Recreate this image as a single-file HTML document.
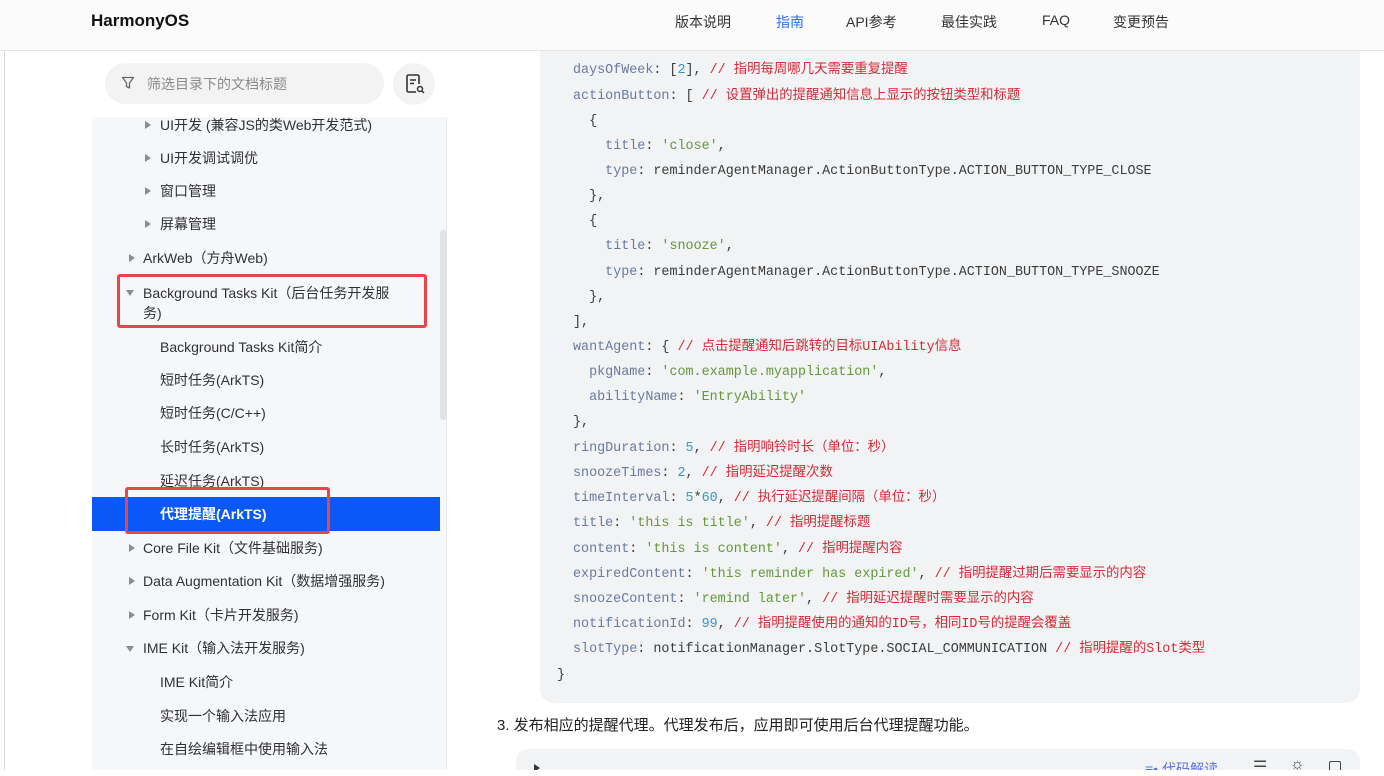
<!DOCTYPE html>
<html><head><meta charset="utf-8">
<style>
*{margin:0;padding:0;box-sizing:border-box}
html{width:1384px;height:776px;overflow:hidden}
body{width:1384px;height:776px;overflow:hidden;background:#fff;font-family:"Liberation Sans","Noto Sans CJK SC",sans-serif;position:relative;color:#191919}
.abs{position:absolute}
.hdr{left:0;top:0;width:1384px;height:51px;background:#fbfbfc;border-bottom:1px solid #e4e5e7}
.logo{left:91px;top:11px;font-size:17px;font-weight:bold;color:#111}
.nav{top:12px;font-size:14px;color:#333}
.side{left:92px;top:51px;width:355px;height:725px;background:#f6f7f9;border-right:1px solid #e8e9eb}
.stop{left:92px;top:51px;width:355px;height:66px;background:#fff}
.search{left:105px;top:63px;width:279px;height:41px;border-radius:21px;background:#f3f3f4;color:#8a8a8a;font-size:14px;padding:11px 0 0 42px}
.sbtn{left:393px;top:63px;width:42px;height:42px;border-radius:50%;background:#f3f3f4}
.it{font-size:14px;color:#303133;white-space:nowrap;line-height:20px}
.tri{width:0;height:0;border-top:4px solid transparent;border-bottom:4px solid transparent;border-left:6px solid #8a8c90}
.trid{width:0;height:0;border-left:4px solid transparent;border-right:4px solid transparent;border-top:6px solid #8a8c90}
.sel{left:92px;top:497px;width:348px;height:34px;background:#0a59f7}
.scroll{left:440px;top:230px;width:7px;height:190px;background:#e2e3e6;border-radius:3px}
.red{border:3px solid #e8464a;border-radius:3px}
.code{left:540px;top:51px;width:820px;height:652px;background:#f1f3f5;border-radius:0 0 14px 14px}
.cl{position:absolute;left:573px;font-family:"Liberation Mono","Noto Sans CJK SC",monospace;font-size:13.4px;color:#3b3b3b;white-space:pre;line-height:18px}
.k{color:#6b78a4}.s{color:#64983a}.c{color:#d72a36}.n{color:#3a94d2}
.p3{left:497px;top:714px;font-size:15px;color:#222}
.code2{left:516px;top:749px;width:844px;height:27px;background:#f1f3f5;border-radius:12px 12px 0 0}
.bot{left:0;top:770px;width:1384px;height:6px;background:#fff}
</style></head><body>
<div class="abs code"></div>
<div class="cl" style="top:62px"><span class="k">daysOfWeek</span>: [<span class="n">2</span>], <span class="c">// 指明每周哪几天需要重复提醒</span></div>
<div class="cl" style="top:88px"><span class="k">actionButton</span>: [ <span class="c">// 设置弹出的提醒通知信息上显示的按钮类型和标题</span></div>
<div class="cl" style="top:113px">  {</div>
<div class="cl" style="top:138px">    <span class="k">title</span>: <span class="s">'close'</span>,</div>
<div class="cl" style="top:163px">    <span class="k">type</span>: reminderAgentManager.ActionButtonType.ACTION_BUTTON_TYPE_CLOSE</div>
<div class="cl" style="top:188px">  },</div>
<div class="cl" style="top:213px">  {</div>
<div class="cl" style="top:238px">    <span class="k">title</span>: <span class="s">'snooze'</span>,</div>
<div class="cl" style="top:264px">    <span class="k">type</span>: reminderAgentManager.ActionButtonType.ACTION_BUTTON_TYPE_SNOOZE</div>
<div class="cl" style="top:289px">  },</div>
<div class="cl" style="top:314px">],</div>
<div class="cl" style="top:339px"><span class="k">wantAgent</span>: { <span class="c">// 点击提醒通知后跳转的目标UIAbility信息</span></div>
<div class="cl" style="top:364px">  <span class="k">pkgName</span>: <span class="s">'com.example.myapplication'</span>,</div>
<div class="cl" style="top:389px">  <span class="k">abilityName</span>: <span class="s">'EntryAbility'</span></div>
<div class="cl" style="top:414px">},</div>
<div class="cl" style="top:440px"><span class="k">ringDuration</span>: <span class="n">5</span>, <span class="c">// 指明响铃时长（单位：秒）</span></div>
<div class="cl" style="top:465px"><span class="k">snoozeTimes</span>: <span class="n">2</span>, <span class="c">// 指明延迟提醒次数</span></div>
<div class="cl" style="top:490px"><span class="k">timeInterval</span>: <span class="n">5</span>*<span class="n">60</span>, <span class="c">// 执行延迟提醒间隔（单位：秒）</span></div>
<div class="cl" style="top:515px"><span class="k">title</span>: <span class="s">'this is title'</span>, <span class="c">// 指明提醒标题</span></div>
<div class="cl" style="top:541px"><span class="k">content</span>: <span class="s">'this is content'</span>, <span class="c">// 指明提醒内容</span></div>
<div class="cl" style="top:566px"><span class="k">expiredContent</span>: <span class="s">'this reminder has expired'</span>, <span class="c">// 指明提醒过期后需要显示的内容</span></div>
<div class="cl" style="top:591px"><span class="k">snoozeContent</span>: <span class="s">'remind later'</span>, <span class="c">// 指明延迟提醒时需要显示的内容</span></div>
<div class="cl" style="top:616px"><span class="k">notificationId</span>: <span class="n">99</span>, <span class="c">// 指明提醒使用的通知的ID号，相同ID号的提醒会覆盖</span></div>
<div class="cl" style="top:641px"><span class="k">slotType</span>: notificationManager.SlotType.SOCIAL_COMMUNICATION <span class="c">// 指明提醒的Slot类型</span></div>
<div class="cl" style="top:667px;left:557px">}</div>

<div class="abs" style="left:4px;top:0;width:1px;height:776px;background:#d8d8d8"></div>
<div class="abs hdr"></div>
<div class="abs logo">HarmonyOS</div>
<div class="abs nav" style="left:675px">版本说明</div>
<div class="abs nav" style="left:776px;color:#2e6ff2">指南</div>
<div class="abs nav" style="left:846px">API参考</div>
<div class="abs nav" style="left:941px">最佳实践</div>
<div class="abs nav" style="left:1042px">FAQ</div>
<div class="abs nav" style="left:1113px">变更预告</div>

<div class="abs side"></div>
<div class="abs stop"></div>
<div class="abs search">筛选目录下的文档标题</div>
<svg class="abs" style="left:121px;top:76px" width="14" height="14" viewBox="0 0 14 14"><path d="M1.5 1.5h11L8.5 7v5l-3-1.5V7z" fill="none" stroke="#666" stroke-width="1.3" stroke-linejoin="round"/></svg>
<div class="abs sbtn"></div>
<svg class="abs" style="left:404px;top:73px" width="22" height="22" viewBox="0 0 22 22"><path d="M12 19H4.5a1.5 1.5 0 0 1-1.5-1.5v-14A1.5 1.5 0 0 1 4.5 2h9A1.5 1.5 0 0 1 15 3.5V11" fill="none" stroke="#333" stroke-width="1.6"/><path d="M6 7h6M6 10.5h4" stroke="#333" stroke-width="1.6"/><circle cx="16" cy="16" r="2.5" fill="none" stroke="#333" stroke-width="1.5"/><path d="M18 18l2 2" stroke="#333" stroke-width="1.5"/></svg>

<div class="abs scroll"></div>
<div class="abs sel"></div>

<div class="abs tri" style="left:145px;top:121px"></div><div class="abs it" style="left:160px;top:115px">UI开发 (兼容JS的类Web开发范式)</div>
<div class="abs tri" style="left:145px;top:154px"></div><div class="abs it" style="left:160px;top:148px">UI开发调试调优</div>
<div class="abs tri" style="left:145px;top:187px"></div><div class="abs it" style="left:160px;top:181px">窗口管理</div>
<div class="abs tri" style="left:145px;top:220px"></div><div class="abs it" style="left:160px;top:214px">屏幕管理</div>
<div class="abs tri" style="left:129px;top:254px"></div><div class="abs it" style="left:143px;top:248px">ArkWeb（方舟Web)</div>
<div class="abs trid" style="left:126px;top:290px"></div><div class="abs it" style="left:143px;top:283px">Background Tasks Kit（后台任务开发服</div>
<div class="abs it" style="left:143px;top:303px">务)</div>
<div class="abs it" style="left:160px;top:337px">Background Tasks Kit简介</div>
<div class="abs it" style="left:160px;top:370px">短时任务(ArkTS)</div>
<div class="abs it" style="left:160px;top:403px">短时任务(C/C++)</div>
<div class="abs it" style="left:160px;top:437px">长时任务(ArkTS)</div>
<div class="abs it" style="left:160px;top:471px">延迟任务(ArkTS)</div>
<div class="abs it" style="left:160px;top:504px;color:#fff;font-weight:bold">代理提醒(ArkTS)</div>
<div class="abs tri" style="left:129px;top:544px"></div><div class="abs it" style="left:143px;top:538px">Core File Kit（文件基础服务)</div>
<div class="abs tri" style="left:129px;top:577px"></div><div class="abs it" style="left:143px;top:571px">Data Augmentation Kit（数据增强服务)</div>
<div class="abs tri" style="left:129px;top:611px"></div><div class="abs it" style="left:143px;top:605px">Form Kit（卡片开发服务)</div>
<div class="abs trid" style="left:126px;top:646px"></div><div class="abs it" style="left:143px;top:638px">IME Kit（输入法开发服务)</div>
<div class="abs it" style="left:160px;top:672px">IME Kit简介</div>
<div class="abs it" style="left:160px;top:706px">实现一个输入法应用</div>
<div class="abs it" style="left:160px;top:739px">在自绘编辑框中使用输入法</div>

<div class="abs red" style="left:117px;top:274px;width:310px;height:54px"></div>
<div class="abs red" style="left:125px;top:487px;width:205px;height:47px"></div>

<div class="abs p3">3. 发布相应的提醒代理。代理发布后，应用即可使用后台代理提醒功能。</div>
<div class="abs code2"></div>
<div class="abs tri" style="left:534px;top:764px;border-left-color:#333"></div>
<div class="abs" style="left:1145px;top:759px;font-size:14px;color:#5b6ef0">≡• 代码解读</div>
<div class="abs" style="left:1253px;top:757px;font-size:16px;color:#444">☰</div>
<div class="abs" style="left:1290px;top:756px;font-size:16px;color:#444">☼</div>
<div class="abs" style="left:1329px;top:761px;width:12px;height:14px;border:1.5px solid #444;border-radius:2px"></div>
<div class="abs bot"></div>
</body></html>
